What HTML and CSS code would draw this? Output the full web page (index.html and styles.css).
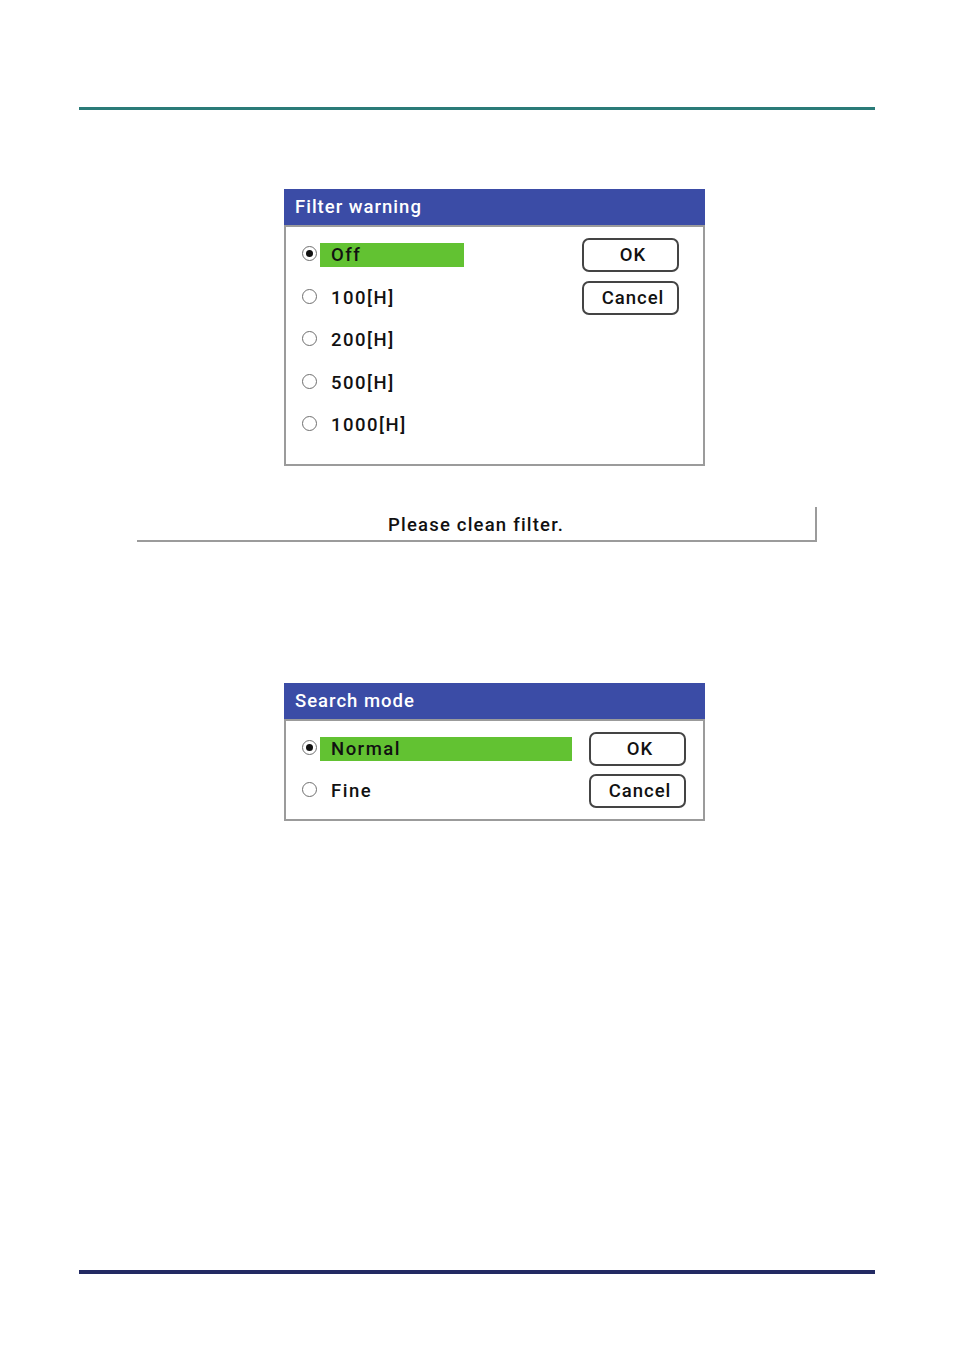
FILE: index.html
```html
<!DOCTYPE html>
<html>
<head>
<meta charset="utf-8">
<link rel="stylesheet" href="styles.css">
</head>
<body>
<div class="page">
  <div class="rule rule-top"></div>

  <div class="dialog dialog-filter">
    <div class="dlg-title">Filter warning</div>
    <div class="dlg-body">
      <div class="options">
        <div class="opt"><span class="radio checked"></span><span class="label sel">Off</span></div>
        <div class="opt"><span class="radio"></span><span class="label">100[H]</span></div>
        <div class="opt"><span class="radio"></span><span class="label">200[H]</span></div>
        <div class="opt"><span class="radio"></span><span class="label">500[H]</span></div>
        <div class="opt"><span class="radio"></span><span class="label">1000[H]</span></div>
      </div>
      <div class="buttons">
        <div class="btn">OK</div>
        <div class="btn">Cancel</div>
      </div>
    </div>
  </div>

  <div class="message">Please clean filter.</div>

  <div class="dialog dialog-search">
    <div class="dlg-title">Search mode</div>
    <div class="dlg-body">
      <div class="options">
        <div class="opt"><span class="radio checked"></span><span class="label sel wide">Normal</span></div>
        <div class="opt"><span class="radio"></span><span class="label">Fine</span></div>
      </div>
      <div class="buttons">
        <div class="btn">OK</div>
        <div class="btn">Cancel</div>
      </div>
    </div>
  </div>

  <div class="spacer"></div>
  <div class="rule rule-bottom"></div>
</div>
</body>
</html>
```

FILE: styles.css
```css
html, body {
  margin: 0;
  padding: 0;
  background: #ffffff;
}

.page {
  width: 954px;
  height: 1350px;
  display: flex;
  flex-direction: column;
  font-family: "Roboto", "Liberation Sans", sans-serif;
  color: #111;
}

.rule {
  margin-left: 79px;
  width: 796px;
}

.rule-top {
  margin-top: 107px;
  background: #2a7b78;
  height: 3px;
}

.rule-bottom {
  background: #232a63;
  height: 4px;
  margin-bottom: 76px;
}

.dialog {
  margin-left: 284px;
  width: 421px;
  display: flex;
  flex-direction: column;
}

.dialog-filter {
  margin-top: 79px;
}

.dialog-search {
  margin-top: 141px;
}

.dlg-title {
  height: 36px;
  background: #3b4ca6;
  color: #ffffff;
  font-size: 18.5px;
  font-weight: 500;
  letter-spacing: 1px;
  line-height: 37px;
  padding-left: 11px;
}

.dlg-body {
  border: 2px solid #9b9b9b;
  display: flex;
  justify-content: space-between;
}

.dialog-filter .dlg-body {
  height: 237px;
}

.dialog-search .dlg-body {
  height: 98px;
}

.options {
  display: flex;
  flex-direction: column;
  gap: 18.5px;
  padding: 16px 0 0 17px;
}

.dialog-search .options {
  gap: 18px;
}

.opt {
  display: flex;
  align-items: center;
  height: 24px;
}

.radio {
  box-sizing: border-box;
  width: 15px;
  height: 15px;
  border-radius: 50%;
  border: 1.5px solid #6f6f6f;
  background: #fff;
  margin-right: 3px;
  margin-left: -1px;
  position: relative;
  margin-top: -3px;
}

.radio.checked::after {
  content: "";
  position: absolute;
  left: 2.5px;
  top: 2.5px;
  width: 7px;
  height: 7px;
  border-radius: 50%;
  background: #111;
}

.label {
  font-size: 18.5px;
  font-weight: 500;
  letter-spacing: 1.5px;
  height: 24px;
  line-height: 25px;
  padding-left: 11px;
}

.label.sel {
  background: #62c232;
  width: 133px;
}

.label.sel.wide {
  width: 241px;
}

.buttons {
  display: flex;
  flex-direction: column;
  gap: 9px;
  padding: 11px 24px 0 0;
}

.dialog-search .buttons {
  gap: 8px;
  padding-right: 17px;
}

.btn {
  box-sizing: border-box;
  width: 97px;
  height: 34px;
  border: 2px solid #444;
  border-radius: 7px;
  text-align: center;
  font-size: 18.5px;
  font-weight: 500;
  line-height: 31px;
  letter-spacing: 1px;
  padding-left: 5px;
}

.message {
  margin-top: 41px;
  margin-left: 137px;
  width: 678px;
  height: 33px;
  border-right: 2px solid #9b9b9b;
  border-bottom: 2px solid #9b9b9b;
  text-align: center;
  font-size: 18.5px;
  font-weight: 500;
  letter-spacing: 1.2px;
  line-height: 36px;
}

.spacer {
  flex: 1;
}
```
